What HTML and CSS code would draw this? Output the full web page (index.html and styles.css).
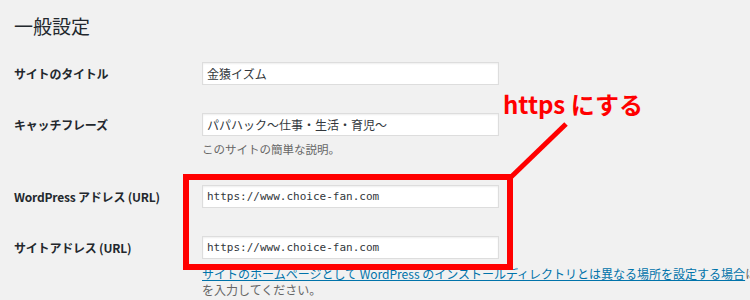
FILE: index.html
```html
<!DOCTYPE html>
<html lang="ja">
<head>
    <meta charset="UTF-8">
    <meta name="viewport" content="width=device-width, initial-scale=1.0">
    <title>一般設定</title>
    <link rel="stylesheet" href="styles.css">
</head>
<body>

<div class="wrap">
    <h1>一般設定</h1>

    <form class="settings">
        <div class="row">
            <label for="blogname">サイトのタイトル</label>
            <div class="field">
                <input type="text" id="blogname" value="金猿イズム">
            </div>
        </div>

        <div class="row">
            <label for="blogdescription">キャッチフレーズ</label>
            <div class="field">
                <input type="text" id="blogdescription" value="パパハック〜仕事・生活・育児〜">
                <p class="description">このサイトの簡単な説明。</p>
            </div>
        </div>

        <div class="row">
            <label for="siteurl">WordPress アドレス (URL)</label>
            <div class="field">
                <input type="text" id="siteurl" class="code" value="https://www.choice-fan.com">
            </div>
        </div>

        <div class="row">
            <label for="home">サイトアドレス (URL)</label>
            <div class="field">
                <input type="text" id="home" class="code" value="https://www.choice-fan.com">
                <p class="description long"><a href="#">サイトのホームページとして WordPress のインストールディレクトリとは異なる場所を設定する場合</a>は、ここにアドレスを入力してください。</p>
            </div>
        </div>
    </form>
</div>

<!-- annotation drawn over the screenshot -->
<svg class="marker" width="750" height="300" viewBox="0 0 750 300">
    <rect x="186" y="177" width="324" height="90" fill="none" stroke="#ff0000" stroke-width="6"/>
    <line x1="510" y1="178" x2="566" y2="124" stroke="#ff0000" stroke-width="5"/>
</svg>
<div class="note">https にする</div>

</body>
</html>
```

FILE: styles.css
```css
* {
    margin: 0;
    padding: 0;
    box-sizing: border-box;
}

body {
    font-family: "Noto Sans CJK JP", sans-serif;
    background-color: #f1f1f1;
    color: #23282d;
    width: 750px;
    height: 300px;
    overflow: hidden;
    position: relative;
}

.wrap {
    padding: 14px 0 0 14px;
    width: 1000px;
}

h1 {
    font-size: 19px;
    font-weight: 400;
    line-height: 24px;
    color: #23282d;
}

.settings {
    margin-top: 24px;
}

/* one setting per row */
.row {
    display: flex;
    margin-bottom: 28px;
}

.row label {
    width: 188px;
    flex-shrink: 0;
    font-size: 12px;
    font-weight: 700;
    line-height: 23px;
    letter-spacing: -0.2px;
}

.field input {
    display: block;
    width: 297px;
    height: 23px;
    padding: 0 4px;
    font-family: "Noto Sans CJK JP", sans-serif;
    font-size: 12px;
    color: #32373c;
    background-color: #fff;
    border: 1px solid #ddd;
    box-shadow: inset 0 1px 2px rgba(0, 0, 0, 0.07);
}

.field input.code {
    font-family: "DejaVu Sans Mono", monospace;
    font-size: 11px;
}

.description {
    margin-top: 5px;
    font-size: 11.5px;
    line-height: 16px;
    color: #666;
}

.description.long {
    margin-top: 7px;
    width: 654px;
    font-size: 12px;
    line-height: 16px;
}

.description a {
    color: #0073aa;
}

/* red annotation */
.marker {
    position: absolute;
    top: 0;
    left: 0;
}

.note {
    position: absolute;
    left: 503px;
    top: 89px;
    font-size: 24px;
    font-weight: 700;
    line-height: 30px;
    color: #ff0000;
}
```
